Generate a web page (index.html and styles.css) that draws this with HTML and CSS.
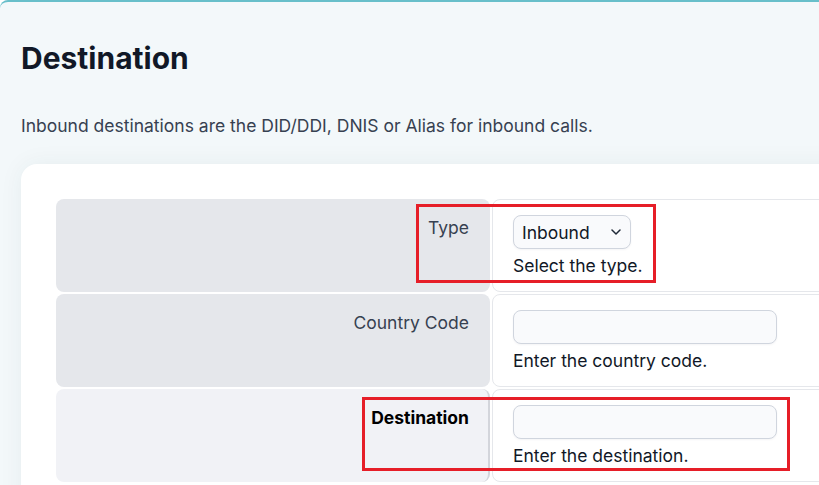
FILE: index.html
```html
<!DOCTYPE html>
<html lang="en">
<head>
    <meta charset="UTF-8">
    <meta name="viewport" content="width=device-width, initial-scale=1.0">
    <title>Destination</title>
    <link rel="stylesheet" href="styles.css">
</head>
<body>

    <div class="panel">
        <h1>Destination</h1>
        <p class="intro">Inbound destinations are the DID/DDI, DNIS or Alias for inbound calls.</p>

        <div class="card">
            <!-- Formulár destinácie -->
            <div class="form-grid">
                <div class="label-cell">Type</div>
                <div class="value-cell">
                    <div class="select-wrap">
                        <select class="field-select">
                            <option>Inbound</option>
                            <option>Outbound</option>
                            <option>Local</option>
                        </select>
                        <svg class="chevron" width="10" height="6" viewBox="0 0 10 6">
                            <path d="M1 1l4 4 4-4" fill="none" stroke="#1f2937" stroke-width="1.5" stroke-linecap="round" stroke-linejoin="round"/>
                        </svg>
                    </div>
                    <div class="help">Select the type.</div>
                </div>

                <div class="label-cell">Country Code</div>
                <div class="value-cell">
                    <input type="text" class="field-input">
                    <div class="help">Enter the country code.</div>
                </div>

                <div class="label-cell required">Destination</div>
                <div class="value-cell">
                    <input type="text" class="field-input">
                    <div class="help">Enter the destination.</div>
                </div>

                <!-- Anotácie -->
                <div class="mark mark-type"></div>
                <div class="mark mark-dest"></div>
            </div>
        </div>
    </div>

</body>
</html>
```

FILE: styles.css
```css
body {
    font-family: Inter, "Noto Sans", sans-serif;
    background-color: #ffffff;
    margin: 0;
    overflow: hidden;
}

.panel {
    width: 1100px;
    min-height: 600px;
    background-color: #f3f8fa;
    border-top: 2px solid #68bfca;
    border-top-left-radius: 8px;
    padding: 34px 0 0 21px;
    box-sizing: border-box;
}

h1 {
    margin: 0;
    font-size: 30px;
    font-weight: 700;
    color: #111827;
    line-height: 44px;
}

.intro {
    margin: 33px 0 0;
    font-size: 17.5px;
    line-height: 26px;
    color: #374151;
}

.card {
    margin-top: 25px;
    background-color: white;
    border-radius: 16px;
    box-shadow: 0 0 24px rgba(20, 60, 70, 0.06);
    padding: 35px;
}

.form-grid {
    position: relative;
    display: grid;
    grid-template-columns: 434px 1fr;
    gap: 2px;
}

.label-cell {
    background-color: #e5e7eb;
    border-radius: 8px;
    padding: 16px 21px 0 0;
    text-align: right;
    font-size: 17.5px;
    line-height: 26px;
    color: #374151;
}

.label-cell.required {
    background-color: #f1f2f6;
    border-right: 2px solid #d3d5db;
    padding-right: 19px;
    font-weight: 700;
    color: #000000;
}

.value-cell {
    border: 1px solid #e5e7eb;
    border-radius: 8px;
    padding: 15px 20px 12px;
}

.select-wrap {
    position: relative;
    width: 118px;
}

.field-select, .field-input {
    display: block;
    box-sizing: border-box;
    height: 34px;
    border: 1px solid #d0d5de;
    border-radius: 8px;
    background-color: #f9fafc;
    box-shadow: 0 1px 2px rgba(30, 40, 80, 0.05);
    font-family: Inter, "Noto Sans", sans-serif;
    font-size: 17.5px;
    color: #111827;
}

.field-select {
    width: 118px;
    padding: 0 8px;
    appearance: none;
    -webkit-appearance: none;
}

.chevron {
    position: absolute;
    right: 10px;
    top: 14px;
    pointer-events: none;
}

.field-input {
    width: 264px;
    padding: 0 10px;
}

.help {
    margin-top: 4px;
    font-size: 17.5px;
    line-height: 26px;
    color: #111827;
}

.mark {
    position: absolute;
    border: 3px solid #e61e28;
    box-sizing: border-box;
}

.mark-type {
    left: 360px;
    top: 5px;
    width: 240px;
    height: 79px;
}

.mark-dest {
    left: 306px;
    top: 198px;
    width: 428px;
    height: 74px;
}
```
